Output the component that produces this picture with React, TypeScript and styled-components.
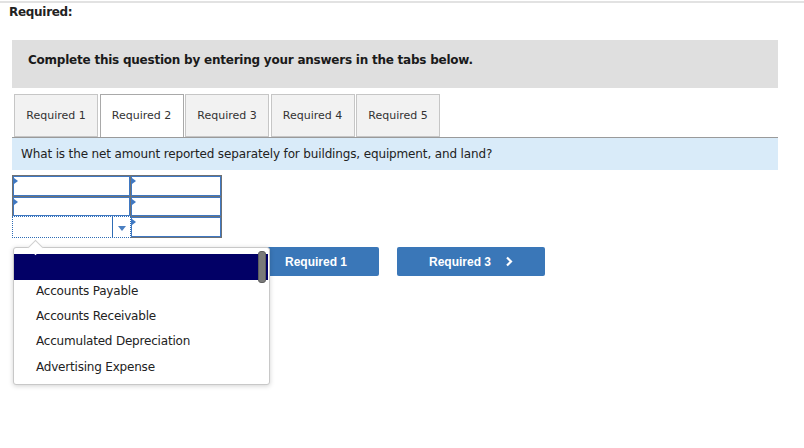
import React from "react";
import styled, { createGlobalStyle } from "styled-components";

const Global = createGlobalStyle`
  html, body { margin: 0; padding: 0; background: #fff; }
  body { font-family: Verdana, "DejaVu Sans", sans-serif; color: #222; }
`;

const Page = styled.div`
  position: relative;
  width: 804px;
  height: 448px;
  border-top: 2px solid #e2e2e2;
  margin-top: 1px;
  box-sizing: border-box;
`;

const Heading = styled.div`
  font-weight: bold;
  font-size: 12px;
  letter-spacing: -0.3px;
  padding: 2px 0 0 9px;
  height: 37px;
  box-sizing: border-box;
  color: #222;
`;

const Instruction = styled.div`
  margin-left: 12px;
  width: 766px;
  height: 48px;
  background: #dfdfdf;
  box-sizing: border-box;
  padding: 13px 0 0 16px;
  font-weight: bold;
  font-size: 12px;
  letter-spacing: -0.23px;
  color: #1a1a1a;
`;

const TabRow = styled.div`
  display: flex;
  gap: 1.5px;
  margin: 6px 0 0 12px;
  width: 766px;
  padding-left: 2px;
  box-sizing: border-box;
  border-bottom: 1px solid #9a9a9a;
  height: 44px;
`;

const Tab = styled.div<{ $active?: boolean }>`
  width: 82px;
  height: 41px;
  margin-bottom: ${(p) => (p.$active ? -1 : 0)}px;
  padding-bottom: ${(p) => (p.$active ? 1 : 0)}px;
  box-sizing: content-box;
  border: 1px solid ${(p) => (p.$active ? "#a9a9a9" : "#c6c6c6")};
  border-bottom: ${(p) => (p.$active ? "none" : "1px solid #c6c6c6")};
  background: ${(p) => (p.$active ? "#fff" : "#f2f2f2")};
  display: flex;
  align-items: center;
  justify-content: center;
  font-size: 11px;
  color: #333;
  position: relative;
  z-index: 1;
`;

const Question = styled.div`
  margin-left: 12px;
  width: 766px;
  height: 32px;
  background: #d9ebf9;
  box-sizing: border-box;
  padding: 9px 0 0 9px;
  font-size: 12px;
  letter-spacing: -0.14px;
  color: #222;
`;

const Grid = styled.div`
  margin: 5px 0 0 12px;
  width: 210px;
  display: grid;
  grid-template-columns: 117px 90px;
  grid-template-rows: 20px 19px 20px;
  gap: 1px;
  padding: 1px;
  background: #6f7173;
  box-sizing: border-box;
  height: 63px;
`;

const Cell = styled.div`
  position: relative;
  background: #fff;
  border: 1px solid #3f78c2;
  box-sizing: border-box;
  &::before {
    content: "";
    position: absolute;
    left: 0;
    top: 1px;
    width: 0;
    height: 0;
    border-left: 4px solid #3f78c2;
    border-top: 3px solid transparent;
    border-bottom: 3px solid transparent;
  }
`;

const SelectCell = styled.div`
  position: relative;
  background: #fff;
  border: 1px dotted #2f6db5;
  margin: -1px -1px -1px -1px;
  box-sizing: border-box;
  display: flex;
  justify-content: flex-end;
  align-items: center;
`;

const SelectArrow = styled.div`
  width: 17px;
  height: 100%;
  border-left: 1px solid #2f6db5;
  display: flex;
  align-items: center;
  justify-content: center;
  &::after {
    content: "";
    border-top: 5px solid #4a7fc1;
    border-left: 4px solid transparent;
    border-right: 4px solid transparent;
    margin-top: 2px;
  }
`;

const ButtonRow = styled.div`
  display: flex;
  gap: 18px;
  margin: 9px 0 0 231px;
`;

const NavButton = styled.div`
  width: 148px;
  height: 29px;
  background: #3a77b8;
  border-radius: 2px;
  color: #fff;
  font-family: "Liberation Sans", Arial, sans-serif;
  font-weight: bold;
  font-size: 12px;
  display: flex;
  align-items: center;
  justify-content: center;
  gap: 14px;
`;

const Popup = styled.div`
  position: absolute;
  left: 13px;
  top: 244px;
  width: 257px;
  height: 138px;
  background: #fff;
  border: 1px solid #c8c8c8;
  border-radius: 3px;
  box-shadow: 0 1px 5px rgba(0, 0, 0, 0.18);
  box-sizing: border-box;
  padding-top: 6px;
  z-index: 5;
  &::before {
    content: "";
    position: absolute;
    left: 16px;
    top: -6px;
    width: 10px;
    height: 10px;
    background: #fff;
    border-left: 1px solid #d0d0d0;
    border-top: 1px solid #d0d0d0;
    transform: rotate(45deg);
  }
`;

const Selected = styled.div`
  height: 26px;
  background: #020066;
  margin-right: 1px;
`;

const Thumb = styled.div`
  position: absolute;
  right: 3px;
  top: 3px;
  width: 6px;
  height: 30px;
  background: #7a7a7a;
  border-radius: 3px;
  border: 1px solid #5f5f5f;
`;

const List = styled.div`
  margin-top: -2px;
`;

const Item = styled.div`
  height: 25.3px;
  display: flex;
  align-items: center;
  padding-left: 22px;
  font-size: 12px;
  letter-spacing: -0.2px;
  color: #222;
`;

const Chevron = ({ left }: { left?: boolean }) => (
  <svg width="8" height="11" viewBox="0 0 8 11">
    <path
      d={left ? "M6 1.5 L2 5.5 L6 9.5" : "M2 1.5 L6 5.5 L2 9.5"}
      stroke="#fff"
      strokeWidth="2.2"
      fill="none"
    />
  </svg>
);

export default function App() {
  return (
    <>
      <Global />
      <Page>
        <Heading>Required:</Heading>
        <Instruction>Complete this question by entering your answers in the tabs below.</Instruction>
        <TabRow>
          <Tab>Required 1</Tab>
          <Tab $active>Required 2</Tab>
          <Tab>Required 3</Tab>
          <Tab>Required 4</Tab>
          <Tab>Required 5</Tab>
        </TabRow>
        <Question>What is the net amount reported separately for buildings, equipment, and land?</Question>
        <Grid>
          <Cell />
          <Cell />
          <Cell />
          <Cell />
          <SelectCell>
            <SelectArrow />
          </SelectCell>
          <Cell />
        </Grid>
        <ButtonRow>
          <NavButton>
            <Chevron left />
            <span>Required 1</span>
          </NavButton>
          <NavButton>
            <span>Required 3</span>
            <Chevron />
          </NavButton>
        </ButtonRow>
        <Popup>
          <Selected />
          <Thumb />
          <List>
            <Item>Accounts Payable</Item>
            <Item>Accounts Receivable</Item>
            <Item>Accumulated Depreciation</Item>
            <Item>Advertising Expense</Item>
          </List>
        </Popup>
      </Page>
    </>
  );
}
